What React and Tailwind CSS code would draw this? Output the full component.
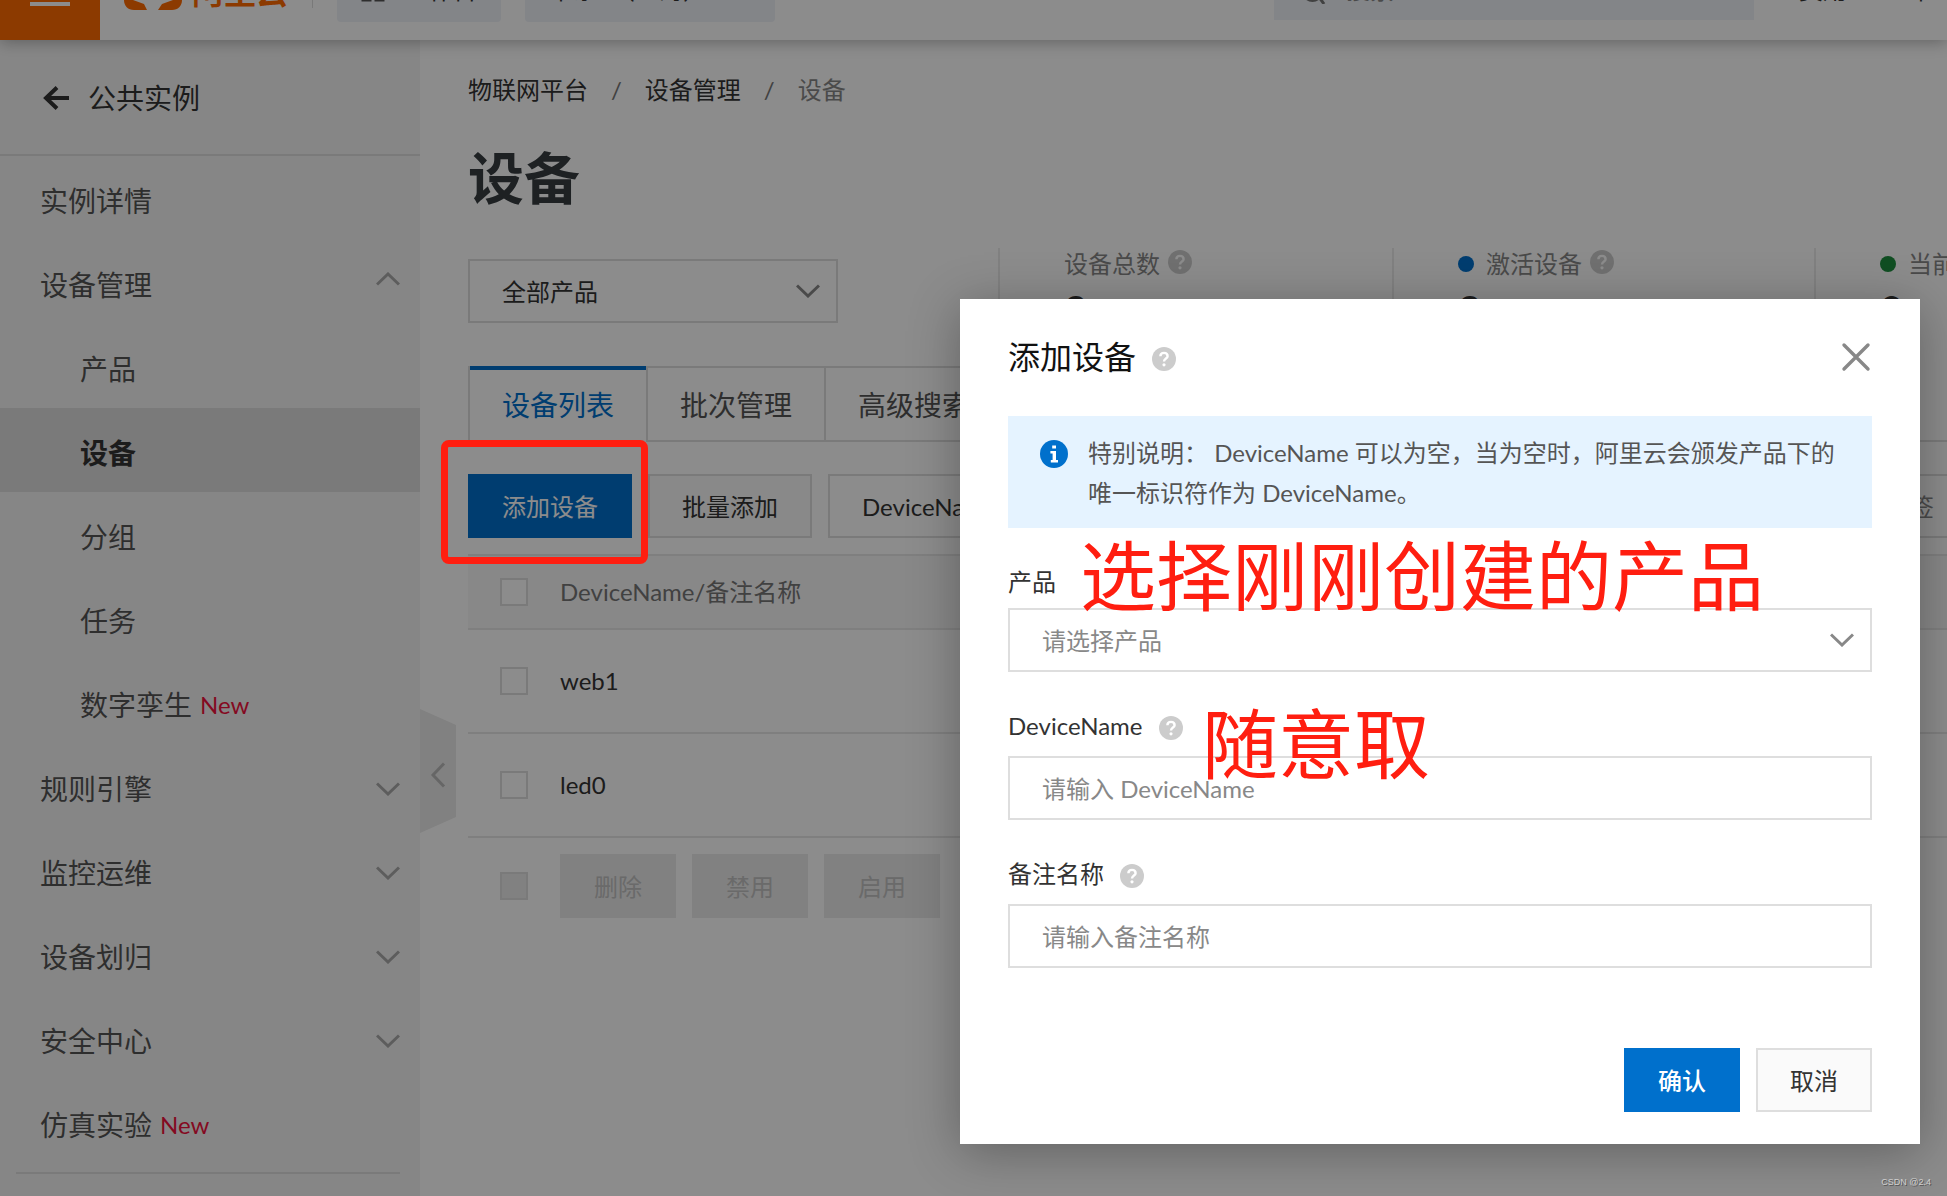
import { useState } from 'react';

const sideItems = [
  { label: '实例详情' },
  { label: '设备管理', arrow: 'up' },
  { label: '产品', child: true },
  { label: '设备', child: true, active: true },
  { label: '分组', child: true },
  { label: '任务', child: true },
  { label: '数字孪生', child: true, isNew: true },
  { label: '规则引擎', arrow: 'down' },
  { label: '监控运维', arrow: 'down' },
  { label: '设备划归', arrow: 'down' },
  { label: '安全中心', arrow: 'down' },
  { label: '仿真实验', isNew: true },
];

const stats = [
  { label: '设备总数', value: 2 },
  { label: '激活设备', value: 2, dot: 'bg-[#0070cc]' },
  { label: '当前在线', value: 0, dot: 'bg-[#1e8e3e]' },
];

const devices = ['web1', 'led0'];

function Chevron({ className = '' }) {
  return (
    <svg viewBox="0 0 24 14" className={`w-6 h-3.5 shrink-0 ${className}`} fill="none" stroke="currentColor" strokeWidth="3">
      <path d="M1 1.5 L12 12 L23 1.5" />
    </svg>
  );
}

function HelpIcon({ className = '' }) {
  return (
    <svg viewBox="0 0 24 24" className={`size-6 shrink-0 ${className}`}>
      <circle cx="12" cy="12" r="12" fill="#cccccc" />
      <path d="M8.4 9.2 C8.4 4.8 15.6 4.8 15.6 9.2 C15.6 11.6 12 11.6 12 14.6" fill="none" stroke="#fff" strokeWidth="2.4" />
      <circle cx="12" cy="17.8" r="1.6" fill="#fff" />
    </svg>
  );
}

function Checkbox({ label, disabled }) {
  return (
    <input
      type="checkbox"
      aria-label={label}
      disabled={disabled}
      className="block size-7 appearance-none border-2 border-[#dedede] bg-white checked:bg-[#0070cc] disabled:bg-[#ebebeb]"
    />
  );
}

function SelectBox({ label, id, options, className = '', textClass = 'text-[#333]', chevronClass = 'text-[#888]' }) {
  return (
    <div className={`relative ${className}`}>
      <select
        id={id}
        aria-label={label}
        className={`block w-full h-16 appearance-none rounded-none border-2 border-[#dedede] bg-white pt-0.5 pl-8 pr-14 text-2xl ${textClass}`}
      >
        {options.map((option) => (
          <option key={option}>{option}</option>
        ))}
      </select>
      <Chevron className={`absolute right-[18px] top-[25px] pointer-events-none ${chevronClass}`} />
    </div>
  );
}

function Header() {
  return (
    <header className="relative z-10 flex h-10 items-end overflow-x-clip bg-white shadow-[0_2px_16px_rgba(0,0,0,0.3)]">
      <div className="-mt-15 flex h-[100px] w-full shrink-0 items-center text-2xl text-[#333]">
        <button aria-label="菜单" className="flex h-full w-[100px] flex-col items-center justify-center gap-2.5 bg-[#ff6a00]">
          <span className="h-1 w-10 bg-white" />
          <span className="h-1 w-10 bg-white" />
          <span className="h-1 w-10 bg-white" />
        </button>
        <a href="#home" className="ml-6 flex items-center gap-2.5 pt-1 text-[32px] font-bold text-[#ff6a00]">
          <svg viewBox="0 0 58 36" className="h-9 w-[58px]" fill="#ff6a00">
            <path d="M22 0 H10 C4 0 0 4 0 10 V26 C0 32 4 36 10 36 H23 L20 30 L9 26 C8 25 8 24 8 23 V13 C8 12 8 11 9 10 L19 7 Z" />
            <path d="M36 0 H48 C54 0 58 4 58 10 V26 C58 32 54 36 48 36 H34 L38 30 L49 26 C50 25 50 24 50 23 V13 C50 12 50 11 49 10 L39 7 Z" />
            <path d="M20 16 H38 V20 H20 Z" />
          </svg>
          阿里云
        </a>
        <span className="ml-6 h-9 w-px bg-[#ddd]" />
        <button className="ml-6 flex h-16 items-center gap-5 rounded bg-[#eff3f8] px-6">
          <svg viewBox="0 0 24 24" className="size-6" fill="none" stroke="#555" strokeWidth="3">
            <path d="M2 2 h7 v7 h-7 z M15 2 h7 v7 h-7 z M2 15 h7 v7 h-7 z M15 15 h7 v7 h-7 z" />
          </svg>
          工作台
        </button>
        <button className="ml-6 flex h-16 w-[250px] items-center justify-between rounded bg-[#eff3f8] pl-6 pr-4">
          华东2（上海）
          <Chevron className="mb-4" />
        </button>
        <label className="ml-auto flex h-15 w-[480px] items-center gap-4 bg-[#eff3f8] px-7">
          <svg viewBox="0 0 28 28" className="size-7 shrink-0" fill="none" stroke="#777" strokeWidth="3">
            <circle cx="10.5" cy="15.5" r="9" />
            <path d="M17 21 L22 28" />
          </svg>
          <input placeholder="搜索..." className="w-full placeholder:text-[#888]" />
        </label>
        <a href="#fee" className="ml-[45px]">费用</a>
        <a href="#ticket" className="ml-[38px] mr-3.5">工单</a>
      </div>
    </header>
  );
}

function Sidebar() {
  return (
    <aside className="relative w-[420px] shrink-0 bg-[#f5f5f5] text-[28px] text-[#555]">
      <a href="#instances" className="flex h-[116px] items-center gap-[18px] border-b-2 border-[#dedede] pt-0.5 pl-[43px] text-[#333]">
        <svg viewBox="0 0 27 24" className="h-6 w-[27px]" fill="none" stroke="currentColor" strokeWidth="4">
          <path d="M26 12 H4 M14 1.5 L3 12 L14 22.5" />
        </svg>
        公共实例
      </a>
      <nav>
        {sideItems.map((item) => (
          <a
            key={item.label}
            href={`#${item.label}`}
            className={`flex h-21 items-center pt-1.5 pr-5 ${item.child ? 'pl-20' : 'pl-10'} ${item.active ? 'bg-[#dedede] font-bold text-[#333]' : ''}`}
          >
            {item.label}
            {item.isNew && <span className="ml-2 text-2xl text-[#f0123c]">New</span>}
            {item.arrow && <Chevron className={`ml-auto text-[#aaa] ${item.arrow === 'up' ? 'mb-3 rotate-180' : ''}`} />}
          </a>
        ))}
      </nav>
      <hr className="ml-4 mr-5 mt-2 border-t-2 border-[#dedede]" />
      <button aria-label="收起" className="absolute left-full top-[669px]">
        <svg viewBox="0 0 36 124" className="h-31 w-9">
          <path d="M0 0 L36 16 V108 L0 124 Z" fill="#ebebeb" />
          <path d="M24 54.5 L13 66 L24 77.5" fill="none" stroke="#bbb" strokeWidth="3" />
        </svg>
      </button>
    </aside>
  );
}

function DevicePage() {
  return (
    <main className="min-w-0 flex-1 overflow-hidden bg-white pl-12 text-2xl text-[#333]">
      <nav className="mt-8 flex h-9 items-center gap-[23px]">
        <a href="#iot">物联网平台</a>
        <span className="text-[#777]">/</span>
        <a href="#manage">设备管理</a>
        <span className="text-[#777]">/</span>
        <span className="text-[#888]">设备</span>
      </nav>
      <h1 className="my-[30px] text-[56px] leading-[80px] font-bold text-[#373d41]">设备</h1>

      <div className="flex items-center">
        <SelectBox label="产品筛选" options={['全部产品']} className="w-[370px] shrink-0" />
        <div className="ml-[160px] flex shrink-0">
          {stats.map((stat) => (
            <div key={stat.label} className="h-[86px] border-l-2 border-[#ebebeb] pl-16 pr-[200px]">
              <div className="flex h-8 items-center text-[#888]">
                {stat.dot && <span className={`mr-3 size-4 rounded-full ${stat.dot}`} />}
                {stat.label}
                <HelpIcon className="mb-1 ml-2" />
              </div>
              <div className="mt-2 text-[40px] leading-[44px] font-bold text-[#333]">{stat.value}</div>
            </div>
          ))}
        </div>
      </div>

      <div role="tablist" className="mt-8 flex h-[76px] text-[28px] text-[#555]">
        <button role="tab" aria-selected="true" className="relative border-l-2 border-[#dedede] px-8 pt-1 text-[#0070cc]">
          <span className="absolute inset-x-0 top-0 h-1 bg-[#0070cc]" />
          设备列表
        </button>
        <button role="tab" className="border-2 border-r-0 border-[#dedede] px-8 pt-1">批次管理</button>
        <button role="tab" className="border-2 border-[#dedede] px-8 pt-1">高级搜索</button>
        <span className="flex-1 border-b-2 border-[#dedede]" />
      </div>

      <div className="mt-8 flex">
        <button className="h-16 shrink-0 bg-[#0070cc] px-[34px] pt-0.5 text-white">添加设备</button>
        <button className="ml-4 h-16 shrink-0 border-2 border-[#dedede] bg-[#fafafa] px-8 pt-0.5">批量添加</button>
        <SelectBox label="搜索字段" options={['DeviceName']} className="ml-4 w-[320px] shrink-0" />
        <input
          aria-label="搜索设备"
          placeholder="请输入 DeviceName"
          className="h-16 w-[568px] shrink-0 border-2 border-l-0 border-[#dedede] px-8 placeholder:text-[#888]"
        />
        <SelectBox label="设备标签" options={['请选择设备标签']} className="ml-4 w-[300px] shrink-0" textClass="text-[#888]" />
      </div>

      <table className="mt-4 w-full text-left">
        <thead>
          <tr className="h-[74px] border-y-2 border-[#e8e8e8] bg-[#f7f7f7] text-[#777]">
            <th className="w-[92px] pl-8"><Checkbox label="全选" /></th>
            <th className="font-normal">DeviceName/备注名称</th>
          </tr>
        </thead>
        <tbody>
          {devices.map((name) => (
            <tr key={name} className="h-[104px] border-b-2 border-[#e8e8e8]">
              <td className="pl-8"><Checkbox label={name} /></td>
              <td>{name}</td>
            </tr>
          ))}
        </tbody>
      </table>

      <div className="mt-4 flex items-center gap-4 pl-8 text-[#c1c1c1]">
        <div className="mr-4"><Checkbox label="批量选择" disabled /></div>
        <button disabled className="h-16 bg-[#ebebeb] px-[34px] pt-0.5">删除</button>
        <button disabled className="h-16 bg-[#ebebeb] px-[34px] pt-0.5">禁用</button>
        <button disabled className="h-16 bg-[#ebebeb] px-[34px] pt-0.5">启用</button>
      </div>
    </main>
  );
}

function AddDeviceDialog({ onClose }) {
  const inputClass = 'block w-full h-16 border-2 border-[#dedede] bg-white px-8 placeholder:text-[#888]';
  const labelClass = 'flex h-10 items-center gap-4';

  return (
    <div className="absolute inset-0 z-20 flex items-start justify-end bg-black/45 pt-[299px] pr-[27px]">
      <form
        role="dialog"
        aria-label="添加设备"
        className="w-[960px] bg-white px-12 pt-[34px] pb-8 text-2xl text-[#333] shadow-[0_8px_48px_rgba(0,0,0,0.3)]"
      >
        <div className="flex h-12 items-center">
          <h2 className="text-[32px] text-[#111]">添加设备</h2>
          <HelpIcon className="ml-4 mt-1" />
          <button type="button" aria-label="关闭" onClick={onClose} className="ml-auto text-[#888]">
            <svg viewBox="0 0 32 30" className="h-[30px] w-8" fill="none" stroke="currentColor" strokeWidth="3.4" strokeLinecap="round">
              <path d="M4 3 L28 27 M28 3 L4 27" />
            </svg>
          </button>
        </div>

        <div className="mt-[35px] flex gap-5 bg-[#e5f3ff] px-8 pt-[17px] pb-[15px] leading-10 text-[#555]">
          <svg viewBox="0 0 28 28" className="mt-[7px] size-7 shrink-0">
            <circle cx="14" cy="14" r="14" fill="#0070cc" />
            <path d="M12.2 5.6 h3.8 v3 h-3.8 z M10.4 11 h5.6 v9 h2 v2.4 h-7.2 v-2.4 h1.8 v-6.6 h-2.2 z" fill="#fff" />
          </svg>
          <p>特别说明： DeviceName 可以为空，当为空时，阿里云会颁发产品下的唯一标识符作为 DeviceName。</p>
        </div>

        <div className="mt-[34px]">
          <label htmlFor="product" className={`mb-1.5 ${labelClass}`}>产品</label>
          <SelectBox id="product" options={['请选择产品']} textClass="text-[#888]" />
        </div>
        <div className="mt-[34px]">
          <label htmlFor="deviceName" className={`mb-2.5 ${labelClass}`}>
            DeviceName
            <HelpIcon className="mt-1" />
          </label>
          <input id="deviceName" placeholder="请输入 DeviceName" className={inputClass} />
        </div>
        <div className="mt-[34px]">
          <label htmlFor="remark" className={`mb-2.5 ${labelClass}`}>
            备注名称
            <HelpIcon className="mt-1" />
          </label>
          <input id="remark" placeholder="请输入备注名称" className={inputClass} />
        </div>

        <div className="mt-20 flex justify-end gap-4">
          <button type="button" className="h-16 bg-[#0070cc] px-[34px] pt-0.5 font-medium text-white">确认</button>
          <button type="button" onClick={onClose} className="h-16 border-2 border-[#dedede] bg-[#fafafa] px-8 pt-0.5">取消</button>
        </div>
      </form>
    </div>
  );
}

// Hand-drawn marks that sit on top of everything
function Annotations() {
  return (
    <div className="pointer-events-none absolute inset-0 z-30 text-[76px] leading-none whitespace-nowrap text-[#ff1e10]">
      <div className="absolute left-[441px] top-[440px] h-[124px] w-[207px] rounded-lg border-[7px] border-[#ff1e10]" />
      <p className="absolute right-[183px] top-[538px]">选择刚刚创建的产品</p>
      <p className="absolute right-[517px] top-[706px]">随意取</p>
      <p className="absolute right-4 bottom-2 font-['Liberation_Sans',sans-serif] text-[9px] leading-3 text-[#d0d0d0] [text-shadow:1px_1px_0_#555]">
        CSDN @2.4
      </p>
    </div>
  );
}

export default function App() {
  const [open, setOpen] = useState(true);

  return (
    <div className="relative flex min-h-screen flex-col overflow-hidden bg-white font-[Lato,'Noto_Sans_CJK_SC',sans-serif]">
      <Header />
      <div className="flex flex-1">
        <Sidebar />
        <DevicePage />
      </div>
      {open && <AddDeviceDialog onClose={() => setOpen(false)} />}
      <Annotations />
    </div>
  );
}
